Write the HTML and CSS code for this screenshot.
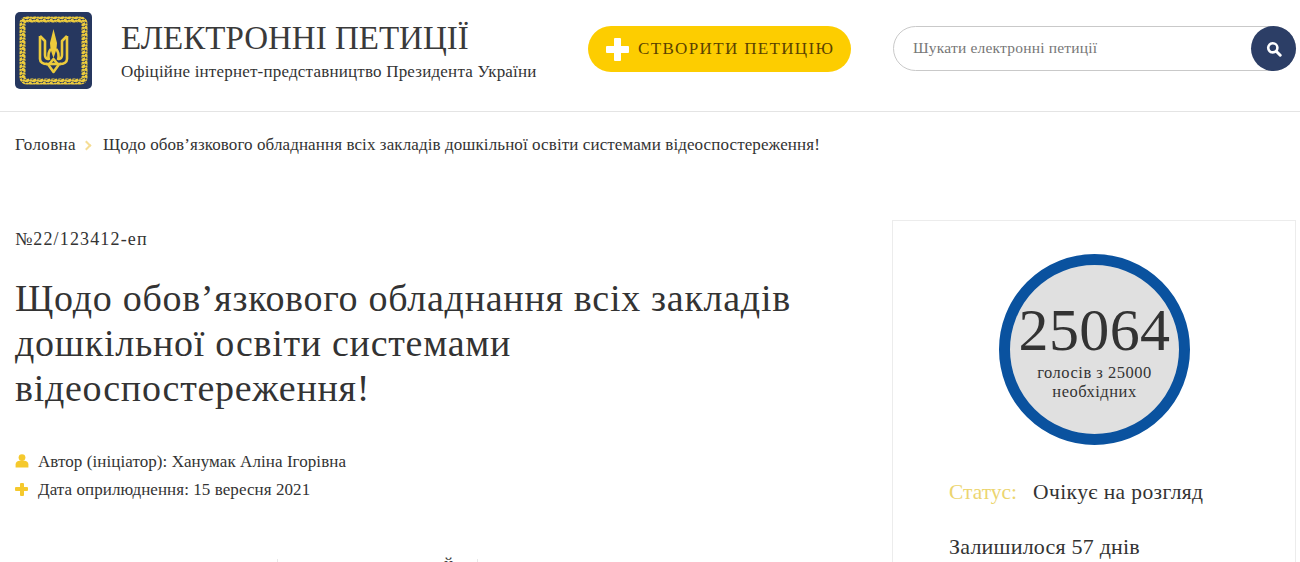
FILE: index.html
```html
<!DOCTYPE html>
<html lang="uk">
<head>
    <meta charset="UTF-8">
    <title>Електронні петиції</title>
    <link rel="stylesheet" href="styles.css">
</head>
<body>

    <!-- Header -->
    <header class="header">
        <a class="logo" href="#">
            <svg viewBox="0 0 77 77" width="77" height="77">
                <defs>
                    <pattern id="leaf" width="7" height="7" patternUnits="userSpaceOnUse">
                        <ellipse cx="2" cy="2" rx="2.9" ry="1.6" fill="#eccb3c" transform="rotate(35 2 2)"/>
                        <ellipse cx="5.5" cy="5.5" rx="2.9" ry="1.6" fill="#eccb3c" transform="rotate(-35 5.5 5.5)"/>
                        <ellipse cx="5.5" cy="1.8" rx="1.8" ry="1.2" fill="#eccb3c"/>
                        <ellipse cx="1.8" cy="5.5" rx="1.8" ry="1.2" fill="#eccb3c"/>
                    </pattern>
                </defs>
                <rect width="77" height="77" rx="5" fill="#26375f"/>
                <rect x="7.5" y="7.5" width="62" height="62" rx="4" fill="none" stroke="url(#leaf)" stroke-width="6"/>
                <path d="M38.5 17 L42 31 C42 37 40 42 38.5 46 C37 42 35 37 35 31 Z" fill="#eccb3c"/>
                <g fill="none" stroke="#eccb3c" stroke-width="2.6" stroke-linejoin="round">
                    <path d="M25 24 L30 29 V43 C30 46 32 47 34 47"/>
                    <path d="M52 24 L47 29 V43 C47 46 45 47 43 47"/>
                    <path d="M25 24 V47 C25 50 28 52 32 52"/>
                    <path d="M52 24 V47 C52 50 49 52 45 52"/>
                    <path d="M36 37 C33 40 33 44 34 48"/>
                    <path d="M41 37 C44 40 44 44 43 48"/>
                    <path d="M31 52 H46"/>
                    <path d="M38.5 47 L33.5 53 L38.5 60 L43.5 53 Z"/>
                </g>
            </svg>
        </a>
        <div class="brand">
            <div class="brand-title">ЕЛЕКТРОННІ ПЕТИЦІЇ</div>
            <div class="brand-sub">Офіційне інтернет-представництво Президента України</div>
        </div>
        <a class="create-btn" href="#">
            <span class="plus plus-big"></span>
            <span>СТВОРИТИ ПЕТИЦІЮ</span>
        </a>
        <form class="search">
            <span class="search-text">Шукати електронні петиції</span>
            <span class="search-btn">
                <svg viewBox="0 0 16 16" width="16" height="16">
                    <circle cx="6.8" cy="6.8" r="4.6" fill="none" stroke="#fff" stroke-width="2.6"/>
                    <path d="M10.2 10.2 L14.2 14.2" stroke="#fff" stroke-width="3" stroke-linecap="round"/>
                </svg>
            </span>
        </form>
    </header>

    <!-- Breadcrumbs -->
    <nav class="crumbs">
        <a class="crumb-home" href="#">Головна</a>
        <span class="crumb-arrow"></span>
        <span>Щодо обов’язкового обладнання всіх закладів дошкільної освіти системами відеоспостереження!</span>
    </nav>

    <main class="content">
        <section class="petition">
            <div class="petition-num">№22/123412-еп</div>
            <h1 class="petition-title">Щодо обов’язкового обладнання всіх закладів дошкільної освіти системами відеоспостереження!</h1>
            <div class="meta">
                <svg class="meta-icon" viewBox="0 0 14 14" width="14" height="14">
                    <circle cx="7" cy="3.6" r="3.4" fill="#f5c92d"/>
                    <path d="M0.6 13.4 V10.4 C0.6 8 2.6 6.8 4.4 6.8 H9.6 C11.4 6.8 13.4 8 13.4 10.4 V13.4 Z" fill="#f5c92d"/>
                </svg>
                <span>Автор (ініціатор): Ханумак Аліна Ігорівна</span>
            </div>
            <div class="meta">
                <span class="plus plus-small"></span>
                <span>Дата оприлюднення: 15 вересня 2021</span>
            </div>
            <div class="tabs">
                <span class="tab">й</span>
            </div>
        </section>

        <aside class="sidebar">
            <div class="votes">
                <div class="votes-count">25064</div>
                <div class="votes-text">голосів з 25000<br>необхідних</div>
            </div>
            <div class="status">
                <span class="status-label">Статус:</span>
                <span class="status-value">Очікує на розгляд</span>
            </div>
            <div class="days">Залишилося 57 днів</div>
        </aside>
    </main>

</body>
</html>
```

FILE: styles.css
```css
html, body {
    height: 562px;
    overflow: hidden;
}
body {
    margin: 0;
    background-color: #ffffff;
    color: #333333;
    font-family: "Liberation Serif", serif;
}
a {
    color: inherit;
    text-decoration: none;
}

/* header */
.header {
    display: flex;
    align-items: flex-start;
    height: 112px;
    padding: 12px 4px 0 15px;
    box-sizing: border-box;
    border-bottom: 1px solid #e4e4e4;
}
.logo {
    display: block;
    width: 77px;
    height: 77px;
}
.brand {
    width: 467px;
    margin-left: 29px;
    padding-top: 6px;
}
.brand-title {
    font-size: 33px;
    line-height: 40px;
    color: #3a3a3a;
}
.brand-sub {
    margin-top: 4px;
    font-size: 17px;
    line-height: 20px;
    letter-spacing: 0.2px;
    color: #333333;
}
.create-btn {
    display: flex;
    align-items: center;
    width: 263px;
    height: 46px;
    margin-top: 14px;
    padding-left: 18px;
    box-sizing: border-box;
    background-color: #fdcd00;
    border-radius: 23px;
    color: #5b4300;
    font-size: 17px;
    letter-spacing: 1.35px;
}
.plus {
    display: inline-block;
    position: relative;
    flex: none;
}
.plus::before, .plus::after {
    content: "";
    position: absolute;
    border-radius: 1px;
}
.plus-big {
    width: 23px;
    height: 23px;
    margin-right: 9px;
}
.plus-big::before {
    left: 0;
    top: 8px;
    width: 23px;
    height: 7px;
    background-color: #ffffff;
}
.plus-big::after {
    left: 8px;
    top: 0;
    width: 7px;
    height: 23px;
    background-color: #ffffff;
}
.search {
    position: relative;
    width: 403px;
    height: 45px;
    margin: 14px 0 0 42px;
    padding-left: 19px;
    box-sizing: border-box;
    border: 1px solid #c9c9c9;
    border-radius: 23px;
    font-size: 15.5px;
    letter-spacing: 0.2px;
    line-height: 41px;
    color: #777777;
}
.search-btn {
    position: absolute;
    right: -1px;
    top: -1px;
    display: flex;
    align-items: center;
    justify-content: center;
    width: 45px;
    height: 45px;
    border-radius: 50%;
    background-color: #2c3e66;
}

/* breadcrumbs */
.crumbs {
    display: flex;
    align-items: center;
    padding: 23px 15px 0;
    font-size: 17px;
    line-height: 20px;
    letter-spacing: 0.1px;
}
.crumb-home {
    letter-spacing: 0.4px;
}
.crumb-arrow {
    width: 5px;
    height: 5px;
    margin: 0 13px 0 7px;
    border-top: 2px solid #f5dd95;
    border-right: 2px solid #f5dd95;
    transform: rotate(45deg);
}

/* main */
.content {
    display: flex;
    padding: 65px 4px 0 15px;
}
.petition {
    width: 877px;
    flex: none;
}
.petition-num {
    margin-top: 9px;
    font-size: 18px;
    line-height: 20px;
    letter-spacing: 1.15px;
}
.petition-title {
    width: 800px;
    margin: 27px 0 0;
    font-size: 38px;
    line-height: 45px;
    letter-spacing: 0.72px;
    font-weight: normal;
    color: #333333;
}
.meta {
    display: flex;
    align-items: center;
    height: 28px;
    font-size: 17px;
    letter-spacing: 0.07px;
}
.meta-icon {
    margin-right: 9px;
    margin-top: -2px;
}
.plus-small {
    width: 13px;
    height: 13px;
    margin-right: 10px;
    margin-top: -2px;
}
.plus-small::before {
    left: 0;
    top: 4.5px;
    width: 13px;
    height: 4px;
    background-color: #f5c92d;
}
.plus-small::after {
    left: 4.5px;
    top: 0;
    width: 4px;
    height: 13px;
    background-color: #f5c92d;
}
.petition-title + .meta {
    margin-top: 37px;
}
.tabs {
    display: flex;
    margin-top: 55px;
    margin-left: 262px;
}
/* only the top few pixels of this row are inside the window */
.tab {
    width: 201px;
    height: 30px;
    padding-right: 24px;
    box-sizing: border-box;
    border-left: 1px solid #e8e8e8;
    border-right: 1px solid #e8e8e8;
    font-size: 17px;
    line-height: 10px;
    text-align: right;
}

/* sidebar */
.sidebar {
    width: 404px;
    height: 400px;
    flex: none;
    padding: 33px 0 0 56px;
    box-sizing: border-box;
    border: 1px solid #ececec;
}
.votes {
    display: flex;
    flex-direction: column;
    align-items: center;
    justify-content: center;
    width: 191px;
    height: 191px;
    margin-left: 50px;
    padding-bottom: 1px;
    box-sizing: border-box;
    border: 11px solid #0a529f;
    border-radius: 50%;
    background-color: #e0e0e0;
}
.votes-count {
    font-size: 60px;
    line-height: 66px;
    letter-spacing: 0.4px;
    color: #333333;
}
.votes-text {
    font-size: 16.5px;
    line-height: 19px;
    letter-spacing: 0.5px;
    text-align: center;
}
.status {
    display: flex;
    gap: 16px;
    margin-top: 35px;
    font-size: 21.5px;
    line-height: 24px;
}
.status-label {
    color: #ecd56f;
}
.status-value {
    letter-spacing: 0.4px;
}
.days {
    margin-top: 31px;
    font-size: 22px;
    line-height: 24px;
    letter-spacing: 0.2px;
}
```
